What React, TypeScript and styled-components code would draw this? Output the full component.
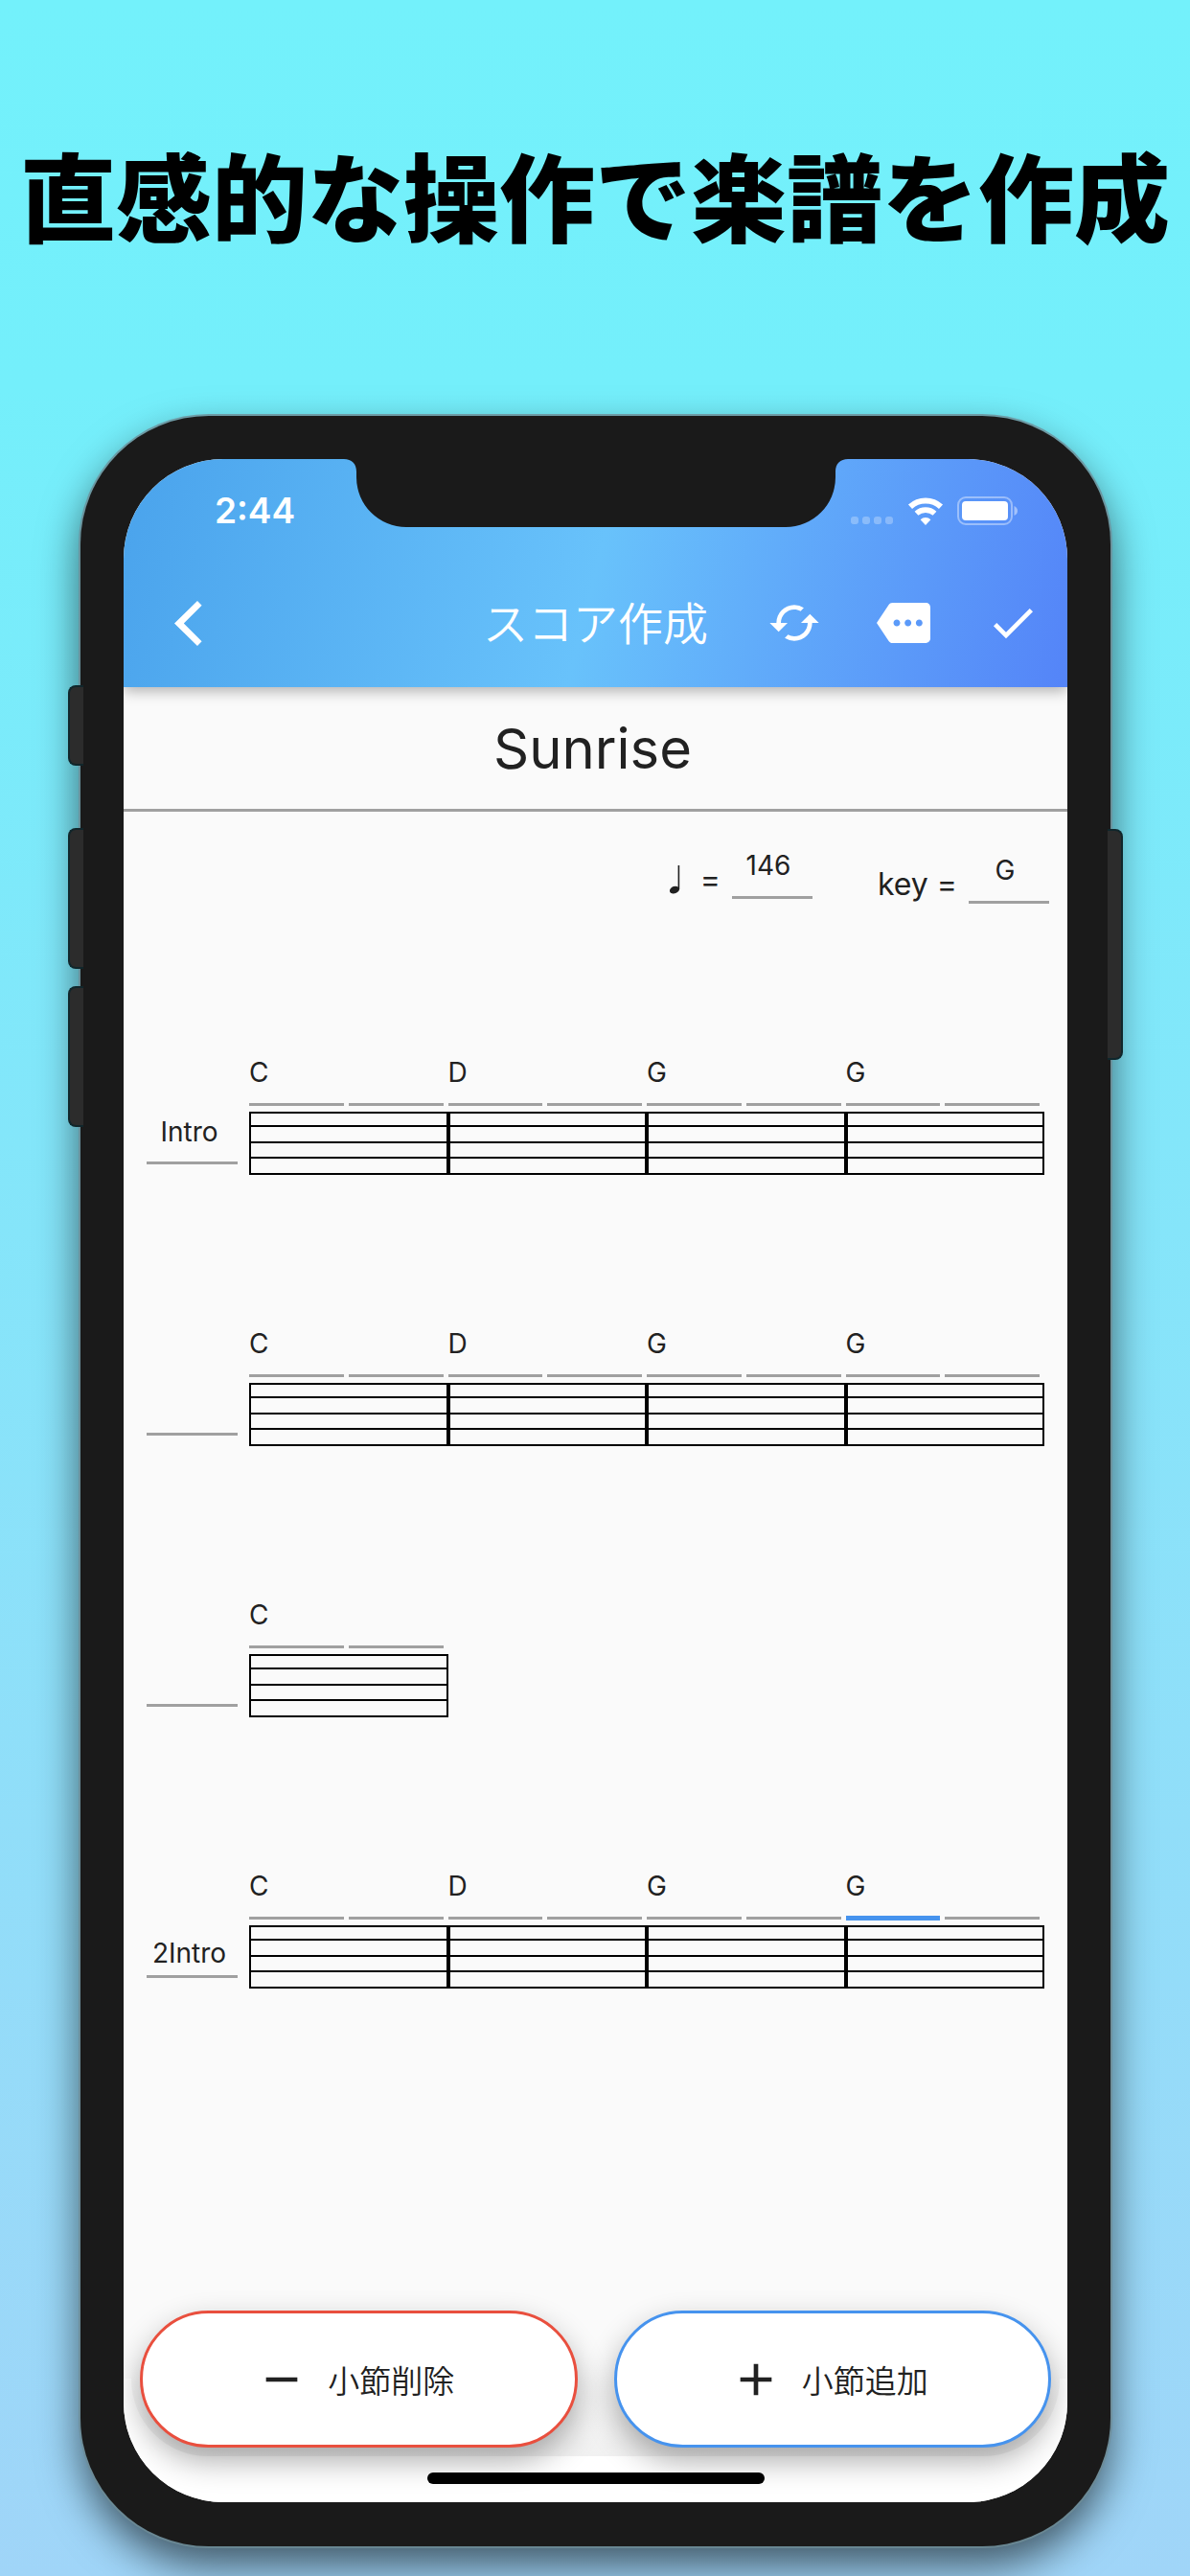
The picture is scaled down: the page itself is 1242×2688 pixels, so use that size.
import React from "react";
import styled, { createGlobalStyle, css } from "styled-components";
import { MdAdd, MdCached, MdCheck, MdMore, MdRemove } from "react-icons/md";

const ink = "#212121";
const rule = "#a0a0a0";
const paper = "#fafafa";
const blue = "#4693ee";
const red = "#e94f3e";

const GlobalStyle = createGlobalStyle`
  *, *::before, *::after { box-sizing: border-box; }
  body {
    margin: 0;
    color: ${ink};
    font-family: Inter, "Noto Sans CJK JP", sans-serif;
  }
  button, input { font: inherit; color: inherit; }
`;

const Page = styled.div`
  min-height: 100vh;
  display: flex;
  flex-direction: column;
  gap: 182px;
  padding: 152px 0 31px;
  overflow: hidden;
  background: linear-gradient(180deg, #73f1fb 0%, #74effb 15%, #a0d5f8 100%);
`;

const Headline = styled.h1`
  margin: 0;
  font-family: "Noto Sans CJK JP", sans-serif;
  font-size: 100px;
  line-height: 100px;
  font-weight: 900;
  text-align: center;
  color: #000;
`;

const Phone = styled.div`
  position: relative;
  margin: 0 83px 0 84px;
  padding: 45px 45px 46px;
  border-radius: 134px;
  background: #1a1a1a;
  box-shadow: 0 0 0 2px rgba(110, 140, 150, 0.8), 0 20px 44px rgba(0, 0, 0, 0.6);
`;

const SideKey = styled.span<{ $side: "left" | "right"; $top: number; $length: number }>`
  position: absolute;
  top: ${(p) => p.$top}px;
  width: 16px;
  height: ${(p) => p.$length}px;
  background: #2c2c2c;
  border: 2px solid #10262b;
  ${(p) =>
    p.$side === "left"
      ? css`
          left: -13px;
          border-right: 0;
          border-radius: 8px 0 0 8px;
        `
      : css`
          right: -13px;
          border-left: 0;
          border-radius: 0 8px 8px 0;
        `}
`;

const Screen = styled.div`
  position: relative;
  display: flex;
  flex-direction: column;
  overflow: hidden;
  border-radius: 104px;
  background: ${paper};
`;

const Notch = styled.svg`
  position: absolute;
  top: -1px;
  left: 50%;
  width: 526px;
  height: 72px;
  margin-left: -263px;
  z-index: 2;
`;

const Header = styled.header`
  position: relative;
  z-index: 1;
  color: #fff;
  background: linear-gradient(104deg, #4aa3ec 0%, #68c2fb 50%, #5484f8 100%);
  box-shadow: 0 4px 14px rgba(0, 0, 0, 0.3);
`;

const StatusBar = styled.div`
  display: flex;
  align-items: center;
  justify-content: space-between;
  height: 104px;
  padding: 4px 52px 0 95px;
`;

const Clock = styled.time`
  font-size: 37px;
  line-height: 40px;
  font-weight: 600;
`;

const StatusIcons = styled.div`
  display: flex;
  align-items: center;
  gap: 14px;
`;

const Toolbar = styled.div`
  display: grid;
  grid-template-columns: 1fr auto 1fr;
  align-items: center;
  height: 134px;
`;

const ScreenTitle = styled.h2`
  margin: 0;
  padding-bottom: 4px;
  font-family: "Noto Sans CJK JP", sans-serif;
  font-size: 47px;
  line-height: 56px;
  font-weight: 350;
`;

const Actions = styled.div`
  display: flex;
  justify-content: flex-end;
`;

const IconButton = styled.button<{ $width: number }>`
  display: flex;
  align-items: center;
  justify-content: center;
  width: ${(p) => p.$width}px;
  height: 114px;
  padding: 0;
  border: 0;
  background: none;
  cursor: pointer;
`;

const TextField = styled.input`
  display: block;
  width: 100%;
  min-width: 0;
  margin: 0;
  border: 0;
  border-bottom: 3px solid ${rule};
  border-radius: 0;
  outline: none;
  background: none;
  text-align: center;
`;

const SongTitle = styled(TextField)`
  height: 130px;
  padding: 0 6px 0 0;
  font-size: 58px;
`;

const SettingField = styled(TextField)`
  width: 84px;
  height: 56px;
  padding: 0 8px 12px 0;
  font-size: 28px;
`;

const ChordField = styled(TextField)<{ $active?: boolean }>`
  height: 64px;
  padding: 0 0 4px;
  font-size: 28px;
  text-align: left;
  ${(p) =>
    p.$active &&
    css`
      border-color: ${blue};
      box-shadow: 0 1px 0 ${blue}, inset 0 -1px 0 ${blue};
    `}
`;

const SectionField = styled(TextField)<{ $low?: boolean }>`
  height: 64px;
  padding: ${(p) => (p.$low ? "14px 6px 0 0" : "0 6px 2px 0")};
  font-size: 28px;
`;

const Settings = styled.div`
  display: flex;
  justify-content: flex-end;
  align-items: flex-start;
  gap: 68px;
  padding: 35px 19px 0 24px;
`;

const Setting = styled.div<{ $drop?: boolean }>`
  display: flex;
  align-items: flex-end;
  gap: 12px;
  padding-top: ${(p) => (p.$drop ? 5 : 0)}px;
`;

const SettingLabel = styled.label`
  display: flex;
  align-items: center;
  gap: 8px;
  height: 40px;
  font-size: 32px;
  line-height: 36px;
`;

const Score = styled.main`
  display: flex;
  flex-direction: column;
  gap: 147px;
  padding: 147px 24px 327px;
`;

const ScoreLine = styled.section`
  display: grid;
  grid-template-columns: 95px 1fr;
  column-gap: 12px;
  align-items: end;
`;

const SectionCell = styled.div`
  padding-bottom: 11px;
`;

const Measures = styled.div`
  display: grid;
  grid-template-columns: repeat(4, 1fr);
`;

const Measure = styled.div`
  display: flex;
  flex-direction: column;
  gap: 6px;
`;

const Chords = styled.div`
  display: grid;
  grid-template-columns: 1fr 1fr;
  gap: 5px;
  padding-right: 5px;
`;

const Staff = styled.div`
  display: grid;
  grid-template-rows: 14px 17px 16px 15px;
  border: 2px solid #000;
`;

const StaffSpace = styled.span`
  border-bottom: 2px solid #000;

  &:last-child {
    border-bottom: 0;
  }
`;

const DockArea = styled.div`
  position: relative;
  z-index: 1;
  padding: 0 8px;
  background: linear-gradient(${paper} 50%, #fff 50%);
`;

const Dock = styled.div`
  display: flex;
  gap: 38px;
  padding: 9px;
  border-radius: 0 0 80px 80px;
  background: linear-gradient(${paper} 40%, #f1f1f1 100%);
`;

const DockButton = styled.button<{ $tone: string }>`
  flex: 1;
  display: flex;
  align-items: center;
  justify-content: center;
  gap: 20px;
  height: 143px;
  padding: 0 8px 0 0;
  border: 3px solid ${(p) => p.$tone};
  border-radius: 72px;
  background: #fff;
  box-shadow: 0 14px 32px rgba(0, 0, 0, 0.32);
  font-family: "Noto Sans CJK JP", sans-serif;
  font-size: 33px;
  line-height: 40px;
  font-weight: 350;
  cursor: pointer;
`;

const HomeArea = styled.div`
  display: flex;
  justify-content: center;
  padding: 17px 0 19px;
  background: #fff;
`;

const HomeIndicator = styled.span`
  width: 352px;
  max-width: 60%;
  height: 12px;
  border-radius: 6px;
  background: #000;
`;

type ScoreRow = { section: string; chords: string[]; low?: boolean; activeMeasure?: number };

const rows: ScoreRow[] = [
  { section: "Intro", chords: ["C", "D", "G", "G"] },
  { section: "", chords: ["C", "D", "G", "G"] },
  { section: "", chords: ["C"] },
  { section: "2Intro", chords: ["C", "D", "G", "G"], low: true, activeMeasure: 3 },
];

const SignalDots = () => (
  <svg width="45" height="29" viewBox="0 0 45 29" fill="#fff" fillOpacity="0.28" aria-hidden="true">
    {[0, 12, 24, 36].map((x) => (
      <rect key={x} x={x} y="20" width="8" height="8" rx="3" />
    ))}
  </svg>
);

const Wifi = () => (
  <svg width="38" height="29" viewBox="0 0 38 29" aria-hidden="true">
    <path d="M3 9.8A23.5 23.5 0 0 1 35 9.8" fill="none" stroke="#fff" strokeWidth="6" />
    <path d="M9.5 16.8A14 14 0 0 1 28.5 16.8" fill="none" stroke="#fff" strokeWidth="5.6" />
    <path d="M19 29L13.6 23.2A7.8 7.8 0 0 1 24.4 23.2Z" fill="#fff" />
  </svg>
);

const Battery = () => (
  <svg width="63" height="30" viewBox="0 0 63 30" aria-hidden="true">
    <rect x="1" y="1" width="56" height="28" rx="8" fill="none" stroke="#fff" strokeOpacity="0.4" strokeWidth="2" />
    <rect x="5" y="5" width="48" height="20" rx="4" fill="#fff" />
    <path d="M59.5 10C62 11 63 13 63 15S62 19 59.5 20Z" fill="#fff" fillOpacity="0.45" />
  </svg>
);

const BackChevron = () => (
  <svg width="29" height="47" viewBox="0 0 29 47" fill="#fff" aria-hidden="true">
    <path d="M24 0L0 23.5L24 47L28.6 42.2L9.8 23.5L28.6 4.8Z" />
  </svg>
);

const QuarterNote = () => (
  <svg width="24" height="30" viewBox="0 0 24 30" fill={ink} role="img" aria-label="四分音符">
    <ellipse cx="5" cy="25.6" rx="5.2" ry="3.7" transform="rotate(-20 5 25.6)" />
    <rect x="8.6" y="0" width="1.6" height="25" />
  </svg>
);

const MeasureView = ({ chord, name, active }: { chord: string; name: string; active: boolean }) => (
  <Measure>
    <Chords>
      <ChordField aria-label={`${name} コード1`} defaultValue={chord} $active={active} />
      <ChordField aria-label={`${name} コード2`} />
    </Chords>
    <Staff aria-hidden="true">
      <StaffSpace />
      <StaffSpace />
      <StaffSpace />
      <StaffSpace />
    </Staff>
  </Measure>
);

export default function App() {
  return (
    <>
      <GlobalStyle />
      <Page>
        <Headline>直感的な操作で楽譜を作成</Headline>
        <Phone>
          <SideKey $side="left" $top={281} $length={84} />
          <SideKey $side="left" $top={430} $length={147} />
          <SideKey $side="left" $top={595} $length={147} />
          <SideKey $side="right" $top={431} $length={241} />
          <Screen>
            <Notch viewBox="0 0 526 72" fill="#1a1a1a" aria-hidden="true">
              <path d="M0 0V1C8 1 13 6 13 14V20A52 52 0 0 0 65 72H461A52 52 0 0 0 513 20V14C513 6 518 1 526 1V0Z" />
            </Notch>
            <Header>
              <StatusBar>
                <Clock>2:44</Clock>
                <StatusIcons>
                  <SignalDots />
                  <Wifi />
                  <Battery />
                </StatusIcons>
              </StatusBar>
              <Toolbar>
                <IconButton $width={134} aria-label="戻る">
                  <BackChevron />
                </IconButton>
                <ScreenTitle>スコア作成</ScreenTitle>
                <Actions>
                  <IconButton $width={114} aria-label="更新">
                    <MdCached size={56} />
                  </IconButton>
                  <IconButton $width={114} aria-label="その他">
                    <MdMore size={56} />
                  </IconButton>
                  <IconButton $width={114} aria-label="完了">
                    <MdCheck size={56} />
                  </IconButton>
                </Actions>
              </Toolbar>
            </Header>
            <SongTitle aria-label="曲名" defaultValue="Sunrise" />
            <Settings>
              <Setting>
                <SettingLabel htmlFor="tempo">
                  <QuarterNote />=
                </SettingLabel>
                <SettingField id="tempo" defaultValue="146" />
              </Setting>
              <Setting $drop>
                <SettingLabel htmlFor="key">key =</SettingLabel>
                <SettingField id="key" defaultValue="G" />
              </Setting>
            </Settings>
            <Score>
              {rows.map((row, r) => (
                <ScoreLine key={r}>
                  <SectionCell>
                    <SectionField aria-label={`${r + 1}段目 セクション`} defaultValue={row.section} $low={row.low} />
                  </SectionCell>
                  <Measures>
                    {row.chords.map((chord, m) => (
                      <MeasureView
                        key={m}
                        chord={chord}
                        name={`${r + 1}段目 ${m + 1}小節`}
                        active={row.activeMeasure === m}
                      />
                    ))}
                  </Measures>
                </ScoreLine>
              ))}
            </Score>
            <DockArea>
              <Dock>
                <DockButton $tone={red}>
                  <MdRemove size={56} />
                  小節削除
                </DockButton>
                <DockButton $tone={blue}>
                  <MdAdd size={56} />
                  小節追加
                </DockButton>
              </Dock>
            </DockArea>
            <HomeArea>
              <HomeIndicator />
            </HomeArea>
          </Screen>
        </Phone>
      </Page>
    </>
  );
}
